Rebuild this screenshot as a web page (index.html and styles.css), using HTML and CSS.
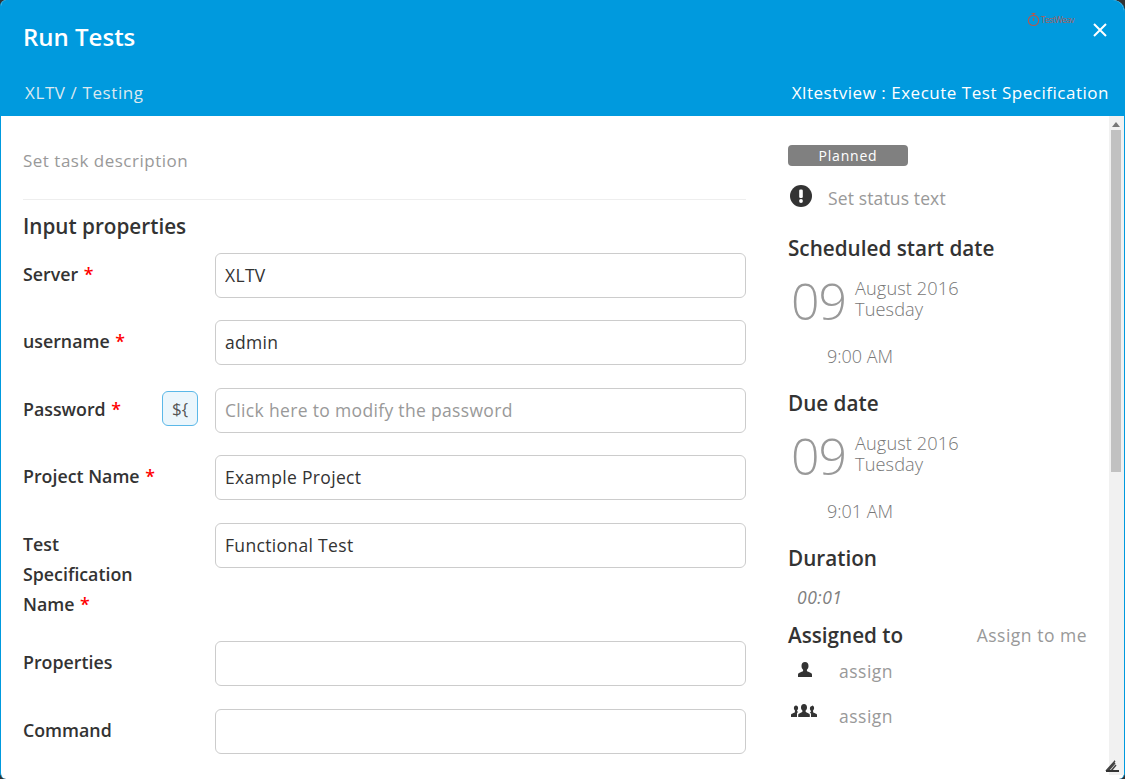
FILE: index.html
```html
<!DOCTYPE html>
<html lang="en">
<head>
<meta charset="utf-8">
<title>Run Tests</title>
<link rel="stylesheet" href="styles.css">
</head>
<body>
<div class="modal">
  <header class="modal-header">
    <div class="title-row">
      <h1 class="title">Run Tests</h1>
      <div class="brand">
        <svg class="brand-icon" viewBox="0 0 14 16" width="13" height="15" aria-hidden="true"><circle cx="7" cy="9" r="5.500" fill="none" stroke="#b5584f" stroke-width="1.200"/><path d="M5 1.500h4M7 1.500v2M7 6v3.500" fill="none" stroke="#b5584f" stroke-width="1.200"/></svg>
        <span>TestWeav</span>
      </div>
      <svg class="close" viewBox="0 0 16 16" width="16" height="16" aria-hidden="true"><path d="M2 2l12 12M14 2L2 14" stroke="#fff" stroke-width="2" fill="none"/></svg>
    </div>
    <div class="crumb-row">
      <span class="crumb">XLTV / Testing</span>
      <span class="task-type">Xltestview : Execute Test Specification</span>
    </div>
  </header>
  <div class="modal-body">
    <main class="content">
      <section class="left">
        <p class="description">Set task description</p>
        <h2 class="section-title">Input properties</h2>
        <div class="row"><label class="label">Server <b class="req">*</b></label><input class="field" value="XLTV"></div>
        <div class="row"><label class="label">username <b class="req">*</b></label><input class="field" value="admin"></div>
        <div class="row"><label class="label">Password <b class="req">*</b></label><span class="var-btn">${</span><input class="field" placeholder="Click here to modify the password"></div>
        <div class="row"><label class="label">Project Name <b class="req">*</b></label><input class="field" value="Example Project"></div>
        <div class="row"><label class="label label-narrow">Test Specification Name <b class="req">*</b></label><input class="field" value="Functional Test"></div>
        <div class="row"><label class="label">Properties</label><input class="field"></div>
        <div class="row"><label class="label">Command</label><input class="field"></div>
      </section>
      <aside class="right">
        <div class="badge">Planned</div>
        <div class="status">
          <svg class="status-icon" viewBox="0 0 22 22" width="22" height="22" aria-hidden="true"><circle cx="11" cy="11" r="11" fill="#333"/><rect x="9.200" y="4.500" width="3.600" height="8.500" rx="1.200" fill="#fff"/><circle cx="11" cy="16" r="1.900" fill="#fff"/></svg>
          <span class="muted">Set status text</span>
        </div>
        <h3 class="side-title">Scheduled start date</h3>
        <div class="date"><span class="day">09</span><span class="month">August 2016<br>Tuesday</span></div>
        <div class="time">9:00 AM</div>
        <h3 class="side-title due">Due date</h3>
        <div class="date"><span class="day">09</span><span class="month">August 2016<br>Tuesday</span></div>
        <div class="time">9:01 AM</div>
        <h3 class="side-title due">Duration</h3>
        <div class="duration">00:01</div>
        <div class="assigned"><h3 class="side-title">Assigned to</h3><span class="muted">Assign to me</span></div>
        <div class="assign-row">
          <svg class="user-icon" viewBox="0 0 16 16" width="16" height="16" aria-hidden="true"><path d="M8 0c2.200 0 3.500 1.700 3.500 3.900 0 1.600-.7 3-1.600 3.800v1.100c0 .6 1 .9 2.500 1.500 1.600.6 2.600 1.200 2.600 2.400V15H1v-2.300c0-1.200 1-1.800 2.600-2.400C5.100 9.700 6.100 9.400 6.100 8.800V7.700C5.200 6.900 4.500 5.500 4.500 3.900 4.500 1.700 5.800 0 8 0z" fill="#333"/></svg>
          <span class="muted">assign</span>
        </div>
        <div class="assign-row">
          <svg class="group-icon" viewBox="0 0 26 16" width="26" height="16" aria-hidden="true"><path d="M13 1c1.900 0 3 1.400 3 3.400 0 1.300-.5 2.500-1.400 3.200v1c0 .5.800.8 2.100 1.300 1.300.5 2.100 1 2.100 2V14H7.200v-2.100c0-1 .8-1.500 2.100-2 1.300-.5 2.100-.8 2.100-1.300v-1C10.500 6.900 10 5.700 10 4.400 10 2.400 11.100 1 13 1z" fill="#333"/><path d="M5 2.500c1.300 0 2.100 1 2.100 2.400 0 1-.4 1.900-1 2.300v.9c0 .4.500.6 1.200.9-.9.400-1.300 1.100-1.300 2V14H0v-2c0-.9.600-1.200 1.600-1.600C2.700 10 3.900 9.700 3.900 9.100v-1.900c-.6-.4-1-1.300-1-2.300 0-1.400.8-2.400 2.100-2.400zM21 2.500c1.300 0 2.100 1 2.100 2.400 0 1-.4 1.900-1 2.300v1.900c0 .6 1.200.9 2.300 1.300 1 .4 1.600.7 1.600 1.600v2h-6v-2.500c0-.9-.4-1.600-1.300-2 .7-.3 1.200-.5 1.200-.9v-.9c-.6-.4-1-1.300-1-2.300 0-1.400.8-2.400 2.100-2.400z" fill="#333"/></svg>
          <span class="muted">assign</span>
        </div>
      </aside>
    </main>
    <div class="scrollbar">
      <svg class="scroll-arrow" viewBox="0 0 8 5" width="8" height="5" aria-hidden="true"><path d="M4 0l4 5H0z" fill="#777"/></svg>
      <div class="scroll-thumb"></div>
    </div>
    <svg class="resize-grip" viewBox="0 0 14 14" width="14" height="14" aria-hidden="true"><path d="M1 12L10 2M3 12l7-8M6 12l5-6M2 11l8-9" stroke="#444" stroke-width="1.500" fill="none"/><path d="M1 12h13" stroke="#333" stroke-width="2" fill="none"/></svg>
  </div>
</div>
</body>
</html>
```
FILE: styles.css
```css
* { box-sizing: border-box; }
html, body { margin: 0; height: 100%; overflow: hidden; }
body {
  background: #333;
  font-family: "Open Sans", "Liberation Sans", sans-serif;
  color: #333;
}
.modal {
  height: 779px;
  display: flex;
  flex-direction: column;
  background: #fff;
  border-radius: 6px 12px 6px 6px;
  border-left: 1px solid #009ade;
  border-right: 1px solid #009ade;
  overflow: hidden;
}
.modal-header {
  height: 116px;
  flex: none;
  background: #009ade;
  color: #fff;
  padding: 0 16px 0 24px;
  margin: 0 -1px;
}
.title-row {
  height: 74px;
  display: flex;
  align-items: flex-start;
}
.title {
  margin: 21px 0 0 -1px;
  font-size: 24px;
  line-height: 32px;
  font-weight: 600;
  flex: 1;
}
.brand {
  display: flex;
  align-items: center;
  gap: 1px;
  margin-top: 12px;
  margin-right: 18px;
  font-size: 8.500px;
  line-height: 15px;
  letter-spacing: -0.6px;
  color: #a8605c;
}
.close { margin-top: 22px; margin-right: 1px; }
.crumb-row {
  display: flex;
  justify-content: space-between;
  font-size: 17px;
  line-height: 37px;
  letter-spacing: 0.52px;
}
.crumb { color: #dbe9f0; margin-left: 1px; letter-spacing: 0.6px; }
.task-type { color: #fff; }
.modal-body {
  flex: 1;
  min-height: 0;
  display: flex;
  position: relative;
}
.content {
  flex: 1;
  min-width: 0;
  display: flex;
  padding-left: 22px;
}
.left { width: 723px; flex: none; }
.right { margin-left: 42px; width: 299px; flex: none; }
.description {
  margin: 0;
  padding: 31px 0 25px;
  height: 84px;
  font-size: 17px;
  line-height: 27px;
  letter-spacing: 0.5px;
  color: #999;
  border-bottom: 1px solid #eee;
}
.section-title {
  margin: 10px 0 10.900px;
  font-size: 20.700px;
  line-height: 32px;
  font-weight: 600;
}
.row {
  display: flex;
  align-items: flex-start;
  margin-bottom: 22.500px;
  position: relative;
}
.label {
  width: 192px;
  flex: none;
  padding-top: 6px;
  font-size: 17.800px;
  line-height: 30px;
  font-weight: 600;
}
.label-narrow { padding-right: 50px; }
.req { color: #f00; font-weight: 600; margin-left: 1px; }
.var-btn {
  position: absolute;
  left: 139px;
  top: 3px;
  width: 36px;
  height: 35px;
  border: 1px solid #5bb8e8;
  border-radius: 6px;
  background: #ebf6fc;
  text-align: center;
  font-size: 17px;
  line-height: 33px;
  color: #555;
}
.field {
  flex: 1;
  min-width: 0;
  height: 45px;
  padding: 0 9px 1px;
  border: 1px solid #ccc;
  border-radius: 6px;
  background: #fff;
  font-family: inherit;
  font-size: 17.500px;
  letter-spacing: 0.33px;
  color: #333;
  outline: 0;
}
.field::placeholder { color: #999; opacity: 1; }
.badge {
  margin-top: 29px;
  width: 120px;
  height: 21px;
  border-radius: 4px;
  background: #808080;
  color: #fff;
  text-align: center;
  font-size: 14px;
  line-height: 21px;
  letter-spacing: 0.8px;
}
.status {
  display: flex;
  align-items: flex-start;
  margin-top: 18px;
  height: 36px;
}
.status-icon { margin-left: 2px; margin-top: 1px; flex: none; }
.status .muted { margin-left: 16px; line-height: 29px; letter-spacing: 0.13px; }
.muted {
  font-size: 17.500px;
  letter-spacing: 0.5px;
  color: #999;
}
.side-title {
  margin: 0;
  font-size: 20.700px;
  line-height: 32px;
  font-weight: 600;
}
.status + .side-title { margin-top: 12px; }
.due { margin-top: 13px; }
.date {
  display: flex;
  height: 55px;
  margin-top: 10px;
}
.day {
  width: 67px;
  padding-left: 3px;
  font-size: 50px;
  line-height: 54px;
  font-weight: 300;
  color: #999;
  letter-spacing: -1px;
}
.month {
  font-size: 18.200px;
  font-weight: 300;
  line-height: 21px;
  letter-spacing: 0.1px;
  color: #777;
  padding-top: 4px;
}
.time {
  margin: 14px 0 0 39px;
  height: 31px;
  font-size: 18px;
  font-weight: 300;
  line-height: 26px;
  color: #777;
}
.duration {
  margin: 10px 0 0 9px;
  height: 29px;
  font-size: 17.500px;
  line-height: 26px;
  font-style: italic;
  letter-spacing: 0.5px;
  color: #808080;
}
.assigned {
  display: flex;
  align-items: center;
  justify-content: space-between;
  height: 32px;
  margin-top: 6px;
}
.assign-row {
  display: flex;
  align-items: center;
  height: 45px;
  padding-left: 51px;
  position: relative;
}
.assigned + .assign-row { margin-top: -3px; }
.user-icon { position: absolute; left: 9px; top: 14px; }
.group-icon { position: absolute; left: 3px; top: 10px; }
.scrollbar {
  width: 15px;
  flex: none;
  margin-bottom: 4px;
  background: #f1f1f1;
  padding: 6px 3px 0 2px;
  display: flex;
  flex-direction: column;
  align-items: center;
}
.scroll-arrow { flex: none; }
.scroll-thumb {
  width: 100%;
  height: 342px;
  margin-top: 3px;
  background: #c1c1c1;
}
.resize-grip { position: absolute; right: 5px; bottom: 6px; }
```
